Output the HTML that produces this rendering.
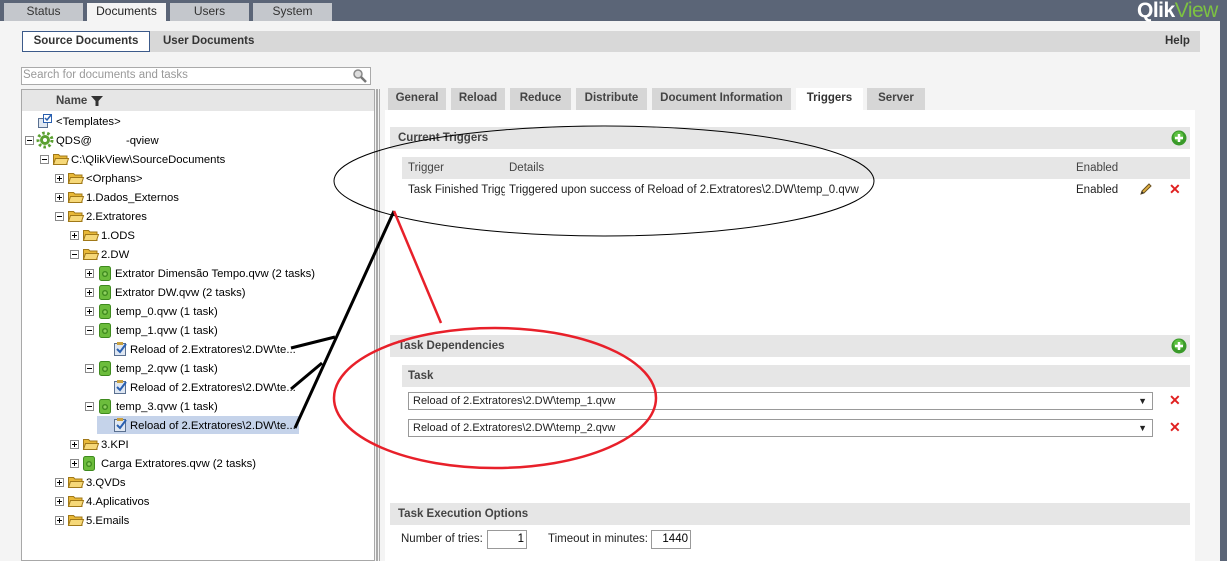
<!DOCTYPE html>
<html><head><meta charset="utf-8"><style>
*{margin:0;padding:0;box-sizing:border-box}
body{width:1227px;height:561px;overflow:hidden;background:#f4f4f4;font-family:"Liberation Sans",Tahoma,sans-serif;font-size:12px;color:#000;position:relative}
.a{position:absolute;white-space:nowrap}
.top{left:0;top:0;width:1227px;height:21px;background:#5b6577}
.tt{top:3px;height:18px;background:#c4c7cc;color:#333;font-size:12px;text-align:center;line-height:17px}
.tx{font-size:11.3px;line-height:16px;margin-top:1px}
.rt{top:88px;height:22px;background:#d6d6d6;color:#444;font-weight:bold;font-size:11.5px;line-height:21px;text-align:center}
.bar{background:#e6e6e6;font-weight:bold;color:#444;font-size:11.5px;line-height:22px;padding-left:8px}
.sel{height:18px;background:#fff;border:1px solid #999;font-size:11px;line-height:16px;padding-left:4px;color:#222}
.x{color:#e02020;font-size:14px;font-weight:bold}
</style></head><body>
<div class="a top"></div>
<div class="a" style="left:1220px;top:0;width:7px;height:561px;background:#5b6577"></div>
<div class="a" style="left:1137px;top:-1px;font-size:21px;font-weight:bold;color:#fff;letter-spacing:-0.5px">Qlik<span style="color:#7dc242;font-weight:normal">View</span></div>
<div class="a tt" style="left:4px;width:79px">Status</div>
<div class="a tt" style="left:87px;width:79px;background:#f4f4f4;color:#222">Documents</div>
<div class="a tt" style="left:170px;width:79px">Users</div>
<div class="a tt" style="left:253px;width:79px">System</div>

<div class="a" style="left:22px;top:31px;width:1178px;height:21px;background:#d8d8d8"></div>
<div class="a" style="left:22px;top:31px;width:128px;height:21px;background:#fff;border:1px solid #3c5a8a;font-weight:bold;font-size:11.5px;line-height:19px;text-align:center;color:#333">Source Documents</div>
<div class="a" style="left:163px;top:31px;font-weight:bold;font-size:11.5px;line-height:21px;color:#333">User Documents</div>
<div class="a" style="left:1165px;top:31px;font-weight:bold;font-size:11.5px;line-height:21px;color:#333">Help</div>

<div class="a" style="left:21px;top:67px;width:350px;height:18px;background:#fff;border:1px solid #aaa;color:#999;font-size:11.5px;line-height:15px;padding-left:1px">Search for documents and tasks</div>
<svg class="a" style="left:352px;top:68px" width="16" height="16"><circle cx="6" cy="6" r="4" fill="#ddd" stroke="#888" stroke-width="1.5"/><line x1="9" y1="9" x2="14" y2="14" stroke="#777" stroke-width="2.5"/></svg>

<div class="a" style="left:21px;top:89px;width:354px;height:472px;background:#fff;border:1px solid #a8a8a8"></div>
<div class="a" style="left:22px;top:90px;width:352px;height:21px;background:#e6e6e6"></div>
<div class="a" style="left:56px;top:91px;font-weight:bold;font-size:11.5px;line-height:20px;color:#444">Name</div>
<svg class="a" style="left:91px;top:96px" width="12" height="10"><path d="M0 0H12L7.5 5V10H4.5V5Z" fill="#333"/></svg>
<div class="a" style="left:376px;top:89px;width:2px;height:472px;background:#aaa"></div>
<div class="a" style="left:379px;top:89px;width:1px;height:472px;background:#aaa"></div>

<div class="a" style="left:97px;top:416px;width:202px;height:18px;background:#c5d3ea"></div>

<svg class="a" style="left:0;top:0" width="380" height="561">
<defs>
<g id="fo"><path d="M0.5 2.5h5l1.5 1.5h7v8.5h-13.5z" fill="#e8b838" stroke="#a07818"/><path d="M2.5 6.5h13l-2 6h-13z" fill="#f6d878" stroke="#a07818"/></g>
<g id="dc"><rect x="0.5" y="0.5" width="11" height="14" rx="2" fill="#6cbc3c" stroke="#3e8a1e"/><circle cx="6" cy="8" r="3" fill="#3e8a1e"/><circle cx="6" cy="8" r="1.6" fill="#8fd060"/></g>
<g id="tk"><rect x="1.5" y="2.5" width="11" height="12" fill="#dfe7f2" stroke="#5a7090"/><rect x="4" y="1" width="6" height="3" fill="#c8a040"/><path d="M4 8l3 3 6-8" fill="none" stroke="#2a60b0" stroke-width="2"/></g>
<g id="ep"><rect x="0.5" y="0.5" width="8" height="8" fill="#fff" stroke="#8a8a8a"/><path d="M2 4.5h5M4.5 2v5" stroke="#000"/></g>
<g id="em"><rect x="0.5" y="0.5" width="8" height="8" fill="#fff" stroke="#8a8a8a"/><path d="M2 4.5h5" stroke="#000"/></g>
</defs>
<rect x="38.5" y="118.5" width="9" height="9" fill="#dfe7f2" stroke="#5a7090"/><rect x="43.5" y="114.5" width="8" height="8" fill="#fff" stroke="#2a60b0"/><path d="M45 118l2 2 4-5" stroke="#2a60b0" fill="none" stroke-width="1.5"/>
<use href="#em" x="25" y="136"/>
<g transform="translate(45 140)"><circle r="5" fill="#5aa030"/><circle r="7" fill="none" stroke="#5aa030" stroke-width="3" stroke-dasharray="2.5 2.5"/><circle r="2" fill="#fff"/></g>
<use href="#em" x="40" y="155"/><use href="#fo" x="53" y="152"/>
<use href="#ep" x="55" y="174"/><use href="#fo" x="68" y="171"/>
<use href="#ep" x="55" y="193"/><use href="#fo" x="68" y="190"/>
<use href="#em" x="55" y="212"/><use href="#fo" x="68" y="209"/>
<use href="#ep" x="70" y="231"/><use href="#fo" x="83" y="228"/>
<use href="#em" x="70" y="250"/><use href="#fo" x="83" y="247"/>
<use href="#ep" x="85" y="269"/><use href="#dc" x="99" y="266"/>
<use href="#ep" x="85" y="288"/><use href="#dc" x="99" y="285"/>
<use href="#ep" x="85" y="307"/><use href="#dc" x="99" y="304"/>
<use href="#em" x="85" y="326"/><use href="#dc" x="99" y="323"/>
<use href="#tk" x="113" y="341"/>
<use href="#em" x="85" y="364"/><use href="#dc" x="99" y="361"/>
<use href="#tk" x="113" y="379"/>
<use href="#em" x="85" y="402"/><use href="#dc" x="99" y="399"/>
<use href="#tk" x="113" y="417"/>
<use href="#ep" x="70" y="440"/><use href="#fo" x="83" y="437"/>
<use href="#ep" x="70" y="459"/><use href="#dc" x="83" y="456"/>
<use href="#ep" x="55" y="478"/><use href="#fo" x="68" y="475"/>
<use href="#ep" x="55" y="497"/><use href="#fo" x="68" y="494"/>
<use href="#ep" x="55" y="516"/><use href="#fo" x="68" y="513"/>
</svg>
<div class="a tx" style="left:56px;top:113px">&lt;Templates&gt;</div>
<div class="a tx" style="left:56px;top:132px">QDS@<span style="display:inline-block;width:34px"></span>-qview</div>
<div class="a tx" style="left:71px;top:151px">C:\QlikView\SourceDocuments</div>
<div class="a tx" style="left:86px;top:170px">&lt;Orphans&gt;</div>
<div class="a tx" style="left:86px;top:189px">1.Dados_Externos</div>
<div class="a tx" style="left:86px;top:208px">2.Extratores</div>
<div class="a tx" style="left:101px;top:227px">1.ODS</div>
<div class="a tx" style="left:101px;top:246px">2.DW</div>
<div class="a tx" style="left:115px;top:265px">Extrator Dimensão Tempo.qvw (2 tasks)</div>
<div class="a tx" style="left:115px;top:284px">Extrator DW.qvw (2 tasks)</div>
<div class="a tx" style="left:116px;top:303px">temp_0.qvw (1 task)</div>
<div class="a tx" style="left:116px;top:322px">temp_1.qvw (1 task)</div>
<div class="a tx" style="left:130px;top:341px">Reload of 2.Extratores\2.DW\te...</div>
<div class="a tx" style="left:116px;top:360px">temp_2.qvw (1 task)</div>
<div class="a tx" style="left:130px;top:379px">Reload of 2.Extratores\2.DW\te...</div>
<div class="a tx" style="left:116px;top:398px">temp_3.qvw (1 task)</div>
<div class="a tx" style="left:130px;top:417px">Reload of 2.Extratores\2.DW\te...</div>
<div class="a tx" style="left:101px;top:436px">3.KPI</div>
<div class="a tx" style="left:101px;top:455px">Carga Extratores.qvw (2 tasks)</div>
<div class="a tx" style="left:86px;top:474px">3.QVDs</div>
<div class="a tx" style="left:86px;top:493px">4.Aplicativos</div>
<div class="a tx" style="left:86px;top:512px">5.Emails</div>

<div class="a rt" style="left:388px;width:58px">General</div>
<div class="a rt" style="left:451px;width:54px">Reload</div>
<div class="a rt" style="left:510px;width:61px">Reduce</div>
<div class="a rt" style="left:576px;width:71px">Distribute</div>
<div class="a rt" style="left:652px;width:139px">Document Information</div>
<div class="a rt" style="left:796px;width:67px;background:#fff;color:#333">Triggers</div>
<div class="a rt" style="left:867px;width:58px">Server</div>
<div class="a" style="left:385px;top:110px;width:810px;height:451px;background:#fff"></div>

<div class="a bar" style="left:390px;top:127px;width:800px;height:22px">Current Triggers</div>
<div class="a bar" style="left:402px;top:157px;width:788px;height:22px;font-weight:normal;padding-left:6px">Trigger<span class="a" style="left:107px;top:0">Details</span><span class="a" style="left:674px;top:0">Enabled</span></div>
<div class="a" style="left:408px;top:182px;font-size:11.5px;line-height:16px;color:#222;width:97px;overflow:hidden">Task Finished Trigger</div>
<div class="a" style="left:509px;top:182px;font-size:11.5px;line-height:16px;color:#222">Triggered upon success of Reload of 2.Extratores\2.DW\temp_0.qvw</div>
<div class="a" style="left:1076px;top:182px;font-size:11.5px;line-height:16px;color:#222">Enabled</div>
<svg class="a" style="left:1139px;top:183px" width="13" height="13"><path d="M2 11l1-3 7-7 2 2-7 7z" fill="#e0b040" stroke="#6a5020"/><path d="M2 11l1-3 2 2z" fill="#333"/></svg>
<div class="a x" style="left:1169px;top:181px">✕</div>
<svg class="a" style="left:1171px;top:130px" width="16" height="16"><circle cx="8" cy="8" r="7.5" fill="#3a9a2a"/><circle cx="7.5" cy="6.5" r="5" fill="#5cc040"/><path d="M8 4v8M4 8h8" stroke="#fff" stroke-width="2.5"/></svg>

<div class="a bar" style="left:390px;top:335px;width:800px;height:22px">Task Dependencies</div>
<svg class="a" style="left:1171px;top:338px" width="16" height="16"><circle cx="8" cy="8" r="7.5" fill="#3a9a2a"/><circle cx="7.5" cy="6.5" r="5" fill="#5cc040"/><path d="M8 4v8M4 8h8" stroke="#fff" stroke-width="2.5"/></svg>
<div class="a bar" style="left:402px;top:365px;width:788px;height:22px;padding-left:6px">Task</div>
<div class="a sel" style="left:408px;top:392px;width:745px">Reload of 2.Extratores\2.DW\temp_1.qvw<span class="a" style="right:5px;top:0;font-size:9px">▼</span></div>
<div class="a sel" style="left:408px;top:419px;width:745px">Reload of 2.Extratores\2.DW\temp_2.qvw<span class="a" style="right:5px;top:0;font-size:9px">▼</span></div>
<div class="a x" style="left:1169px;top:392px">✕</div>
<div class="a x" style="left:1169px;top:419px">✕</div>

<div class="a bar" style="left:390px;top:503px;width:800px;height:22px">Task Execution Options</div>
<div class="a" style="left:401px;top:533px;font-size:11.5px;color:#222">Number of tries:</div>
<div class="a" style="left:487px;top:530px;width:40px;height:19px;border:1px solid #999;text-align:right;padding-right:2px;font-size:11.5px;line-height:17px">1</div>
<div class="a" style="left:548px;top:533px;font-size:11.5px;color:#222">Timeout in minutes:</div>
<div class="a" style="left:651px;top:530px;width:40px;height:19px;border:1px solid #999;text-align:right;padding-right:2px;font-size:11.5px;line-height:17px">1440</div>

<svg class="a" style="left:0;top:0" width="1227" height="561">
<ellipse cx="604" cy="181" rx="270" ry="55" fill="none" stroke="#000" stroke-width="1"/>
<path d="M394 211L295 428M291 348L335 337M291 389L322 363" stroke="#000" stroke-width="3" fill="none"/>
<path d="M394 211L441 323" stroke="#e8202a" stroke-width="2.5" fill="none"/>
<ellipse cx="495" cy="398" rx="161" ry="70" fill="none" stroke="#e8202a" stroke-width="2.5"/>
</svg>
</body></html>
